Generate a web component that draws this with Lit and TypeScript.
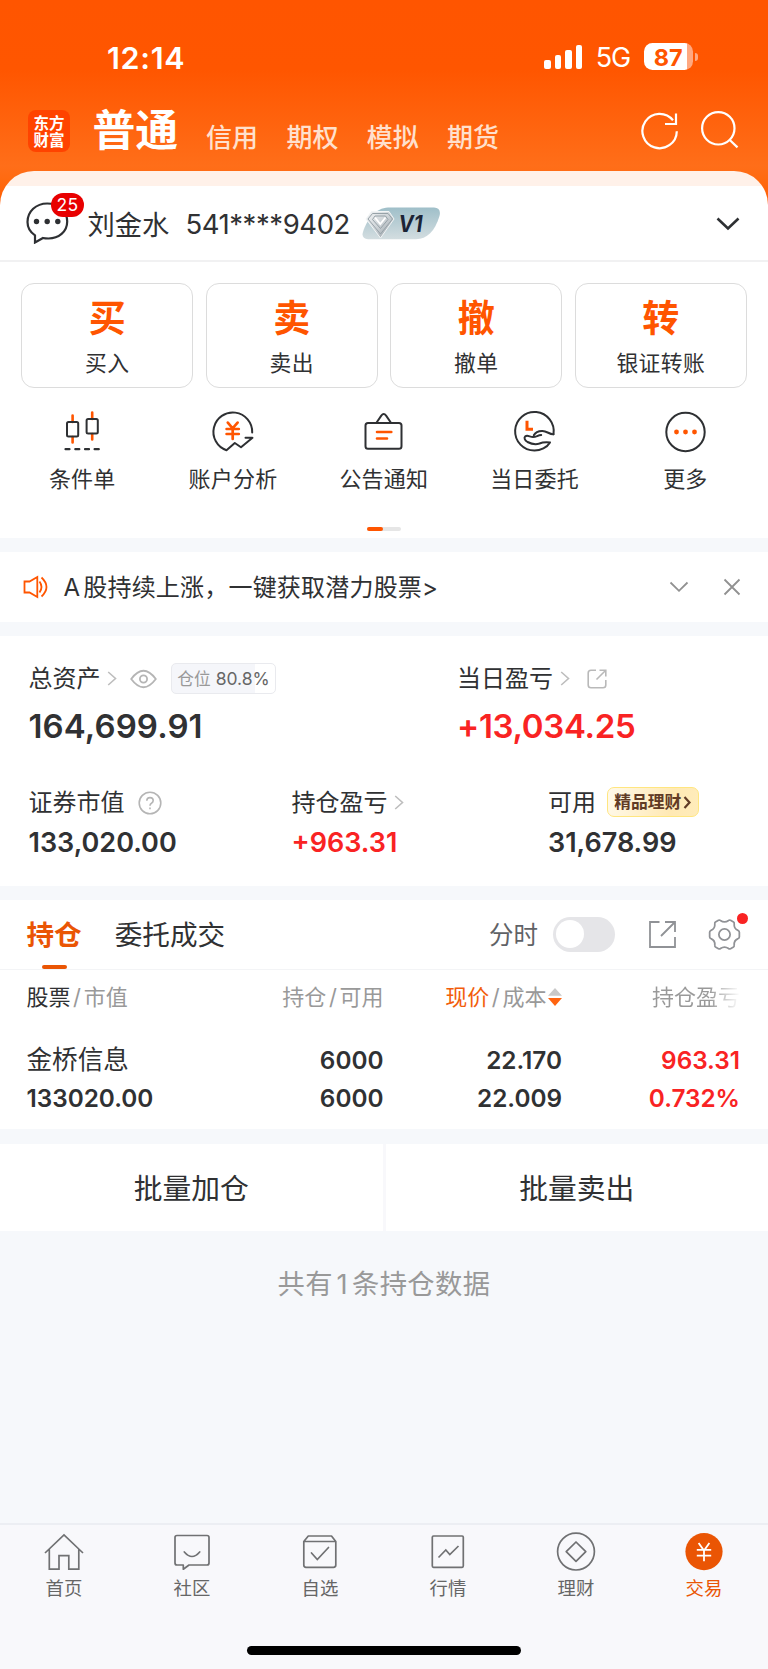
import { LitElement, html, css, svg } from "lit";
import { customElement } from "lit/decorators.js";
import { classMap } from "lit/directives/class-map.js";

const DARK = "#2e3033";
const ORANGE = "#ff5500";

const quickCards = [
  { glyph: "买", label: "买入" },
  { glyph: "卖", label: "卖出" },
  { glyph: "撤", label: "撤单" },
  { glyph: "转", label: "银证转账" },
];

const tools = [
  {
    label: "条件单",
    icon: svg`
      <path d="M12.6 5.5V12M12.6 27V32.5M32.2 2.5V9M32.2 24V29.5" stroke=${ORANGE} stroke-width="2.6" stroke-linecap="round"/>
      <rect x="7" y="12" width="11.2" height="14.5" rx="1.5" stroke=${DARK}/>
      <rect x="26.6" y="9" width="11.2" height="14.5" rx="1.5" stroke=${DARK}/>
      <path d="M5.5 39.2H9.5M15.3 39.2H19.3M25 39.2H29M34.6 39.2H38.8" stroke=${DARK} stroke-width="2.2" stroke-linecap="round"/>`,
  },
  {
    label: "账户分析",
    icon: svg`
      <path d="M42.200 22.500A19.400 19.400 0 1 0 16.500 40.200L24.800 33L31 37.300L42.500 27.800H35.500" stroke=${DARK} stroke-linejoin="round" stroke-linecap="round"/>
      <path d="M17.8 12.6L22.6 18.3L27.6 12.6M16.6 19H28.8M16.6 24H28.8M22.7 18.5V29" stroke=${ORANGE} stroke-width="2.7" stroke-linecap="round"/>`,
  },
  {
    label: "公告通知",
    icon: svg`
      <rect x="4.5" y="13" width="36" height="25.8" rx="2.5" stroke=${DARK}/>
      <path d="M15.6 12.5L20.3 5.6Q22.7 2.6 25.1 5.6L29.8 12.5" stroke=${DARK}/>
      <path d="M16 22H30.3M16 28.5H26" stroke=${ORANGE} stroke-width="2.6" stroke-linecap="round"/>`,
  },
  {
    label: "当日委托",
    icon: svg`
      <path d="M41.500 24.200A19.300 19.300 0 1 0 22.500 40.600C28.500 40.600 35 37.500 38 32.400C34 32 29.500 32.600 27.500 33.500C23 35 18.500 33.500 15.500 32C12.500 30.300 11.800 27.500 13.300 26.300C15.500 24.800 18 27 21 27C24.500 27 25.500 25.300 29.200 25" stroke=${DARK} stroke-linejoin="round" stroke-linecap="round"/>
      <path d="M21.800 25.300C23.500 22 27.500 20.800 30.500 20.900C35 21 38 24.800 41.500 24.200" stroke=${DARK} stroke-linecap="round"/>
      <path d="M15 10.800V19.300H21" stroke=${ORANGE} stroke-width="3"/>`,
  },
  {
    label: "更多",
    icon: svg`
      <circle cx="22.5" cy="22" r="19.2" stroke=${DARK}/>
      <g fill=${ORANGE}><circle cx="13.5" cy="22" r="2.4"/><circle cx="22.5" cy="22" r="2.4"/><circle cx="31.5" cy="22" r="2.4"/></g>`,
  },
];

const navItems = [
  {
    label: "首页",
    icon: svg`<path d="M1 21L20 3L39 21M5.3 17.5V37.2H15V23.6H24.8V37.2H34.8V17.5"/>`,
  },
  {
    label: "社区",
    icon: svg`<path d="M5 3.5H35Q37 3.5 37 5.5V31Q37 33 35 33H17L11.3 37.2V33H5Q3 33 3 31V5.5Q3 3.5 5 3.5Z" stroke-linejoin="round"/><path d="M12.3 20Q20 29 27.7 20" stroke-linecap="round"/>`,
  },
  {
    label: "自选",
    icon: svg`<path d="M3.8 9.5V33Q3.8 35.3 6 35.3H33.5Q35.8 35.3 35.8 33V9.5L31.5 4H8.3ZM3.8 9.5H35.8" stroke-linejoin="round"/><path d="M11.5 21L17.3 27.5L28.5 15.5" stroke-linecap="round"/>`,
  },
  {
    label: "行情",
    icon: svg`<rect x="4.3" y="4" width="31" height="31.3" rx="1.2"/><path d="M10.5 25.5L17.8 18L21.8 22.5L30.5 14"/>`,
  },
  {
    label: "理财",
    icon: svg`<circle cx="20" cy="19.6" r="18.4"/><path d="M20 10L29.8 19.6L20 29.4L10.2 19.6Z" stroke-linejoin="round"/>`,
  },
  {
    label: "交易",
    active: true,
    icon: svg`<circle cx="20" cy="19.6" r="18.6" fill="#ea5504" stroke="none"/><path d="M14.6 11L20 18.6L25.4 11M12.8 17.9H27.2M12.8 23.6H27.2M20 18V29.3" stroke="#fff" stroke-width="1.8"/>`,
  },
];

const chevronRight = html`<svg class="chev" width="10" height="15" viewBox="0 0 10 15"><path d="M1.2 1L8.5 7.5L1.2 14" fill="none" stroke="#bdbdbd" stroke-width="1.6"/></svg>`;

@customElement("app-root")
export class AppRoot extends LitElement {
  static styles = css`
    :host {
      display: flex;
      flex-direction: column;
      width: 768px;
      height: 1669px;
      background: #f6f8fb;
      color: #303133;
      font-family: Inter, "Noto Sans CJK SC", sans-serif;
      white-space: nowrap;
      overflow: hidden;
    }
    * { box-sizing: border-box; }
    svg { display: block; flex: none; fill: none; }
    .top {
      height: 262px;
      flex: none;
      background: linear-gradient(#ff5500 0, #ff5600 70px, #ff6e19 166px, #ff6a10 180px, #ff5a00 210px);
      color: #fff;
    }
    .status { height: 86px; padding: 28px 70px 0 107px; display: flex; align-items: center; }
    .clock { font-size: 30.5px; font-weight: 600; margin-right: auto; letter-spacing: .7px; }
    .net { font-size: 27px; font-weight: 400; letter-spacing: -1px; margin: 1px 13.5px 0 13.5px; }
    .signal { display: flex; align-items: flex-end; gap: 4.2px; height: 24px; }
    .bar { width: 6.3px; background: #fff; border-radius: 2px; }
    .b1 { height: 9.3px; } .b2 { height: 13.8px; } .b3 { height: 18.8px; } .b4 { height: 24px; }
    .battery {
      width: 49px; height: 26.6px; border-radius: 8.5px; margin-top: -1px;
      background: linear-gradient(90deg, #fff 43.3px, #ffa880 43.3px);
      color: #ff5500; font-size: 23.5px; font-weight: 700; display: grid; place-items: center;
    }
    .nub { width: 3.3px; height: 8.5px; background: #ffa880; border-radius: 0 4px 4px 0; margin-left: 2px; }
    .head { height: 85px; padding: 3px 28px 0 28px; display: flex; align-items: center; }
    .logo {
      width: 42px; height: 42px; border-radius: 8px; background: #ff4300; margin-top: 2px;
      display: flex; flex-direction: column; justify-content: center; text-align: center;
      font: 700 15.5px/17px "Noto Sans CJK SC", sans-serif;
    }
    .h1 { font-size: 42.8px; font-weight: 700; margin: 2px 0 0 22.5px; line-height: 60px; }
    .modes { display: flex; gap: 28.3px; margin: 10px auto 0 28px; font-size: 26px; font-weight: 500; color: #ffe0cd; }
    .head svg { margin-top: 1px; }
    .head .search { margin-left: 20.5px; }
    .sheet { height: 91px; background: linear-gradient(#fff1e9 15px, #fff 15px); border-radius: 34px 34px 0 0; padding: 15px 28px 0 26px; border-bottom: 2px solid #f1f1f2; color: #303133; display: flex; align-items: center; }
    .chat { position: relative; width: 44px; height: 42px; }
    .count {
      position: absolute; left: 25px; top: -9.5px; width: 33px; height: 24.5px; border-radius: 13px;
      background: #e80000; color: #fff; font-size: 17.5px; display: grid; place-items: center; letter-spacing: .4px;
    }
    .name { font-size: 27.3px; margin-left: 17.5px; }
    .acct { font-size: 27.5px; margin-left: 16px; letter-spacing: -.42px; padding-top: 1px; }
    .vip { margin-left: 12px; margin-top: 1px; }
    .vtext { font: italic 700 22.5px Inter, sans-serif; }
    .down { margin-left: auto; margin-top: 1px; }
    .panel { background: #fff; flex: none; }
    .quick { height: 276px; padding: 21.3px 21.3px 0; }
    .cards { display: grid; grid-template-columns: repeat(4, 1fr); gap: 12.7px; }
    .card {
      height: 104.5px; border: 1.5px solid #dcdcdc; border-radius: 13px; padding-top: 13px;
      display: flex; flex-direction: column; align-items: center;
    }
    .glyph { color: #ff5500; font-size: 37px; font-weight: 700; line-height: 44px; }
    .clabel { font-size: 21.8px; line-height: 42px; letter-spacing: .4px; margin-top: .5px; }
    .tools { display: grid; grid-template-columns: repeat(5, 150.8px); margin: 22px -14.5px 0; }
    .tool { display: flex; flex-direction: column; align-items: center; }
    .tool svg { stroke-width: 2; }
    .tlabel { font-size: 22px; line-height: 32px; margin-top: 9.5px; letter-spacing: .2px; }
    .pager { display: flex; width: 33.3px; height: 3.6px; border-radius: 2px; background: #e6e6e6; margin: 32px auto 0; }
    .on { width: 16px; background: #ff5500; border-radius: 2px; }
    .notice { height: 70px; margin-top: 14px; padding: 0 27.5px 0 22.5px; display: flex; align-items: center; font-size: 24px; letter-spacing: .2px; }
    .ntext { margin: 0 auto 0 15px; padding-bottom: 3px; }
    .lead { margin-right: 3px; }
    .close { margin-left: 33.5px; }
    .assets { height: 249.5px; margin-top: 14px; padding: 25px 28.5px 0; }
    .duo { display: grid; grid-template-columns: 428.5px 1fr; }
    .trio { display: grid; grid-template-columns: 263px 256.5px 1fr; margin-top: 39px; }
    .lab { display: flex; align-items: center; height: 36px; font-size: 24px; line-height: 34px; padding-bottom: 1px; }
    .chev { margin-left: 6.5px; }
    .eye { margin-left: 12.5px; }
    .share { margin-left: 17px; }
    .help { margin-left: 13.5px; }
    .big { font-size: 33px; font-weight: 600; line-height: 40px; margin-top: 9px; letter-spacing: .1px; }
    .big.red { letter-spacing: -.3px; }
    .mid { font-size: 27px; font-weight: 600; line-height: 34px; margin-top: 4.5px; }
    .red { color: #f92323; }
    .tag {
      width: 105px; height: 31.5px; margin-left: 14.5px; border: 1.5px solid #e9eaee; border-radius: 5px;
      background: linear-gradient(90deg, #f5f6fa 83px, #fff 83px); font-size: 17.5px; color: #666;
      display: flex; align-items: center; justify-content: center; gap: 5px;
    }
    .tagname { font-size: 16.7px; color: #999; }
    .gold {
      width: 91.5px; height: 30px; margin: -1px 0 0 11px; border-radius: 7px; border: 1.5px solid #ffe680;
      background: linear-gradient(100deg, #fff9ea, #ffe9b4 70%, #ffecbb); color: #613b25;
      font-size: 16.8px; font-weight: 700; display: flex; align-items: center; justify-content: center; gap: 2px;
    }
    .hold { height: 229.5px; margin-top: 14px; }
    .tabs { height: 70.5px; border-bottom: 1.5px solid #f3f4f6; display: flex; align-items: center; padding: 0 27.5px 0 26.5px; font-size: 27.6px; }
    .tab { height: 69px; line-height: 70px; display: flex; flex-direction: column; align-items: center; }
    .tab.current { color: #ea5504; font-weight: 600; }
    .tab.current::after { content: ""; width: 25px; height: 5px; border-radius: 2px; background: #ea5504; margin-top: -5px; }
    .second { margin: 0 auto 0 33px; }
    .time { font-size: 24.5px; color: #606266; margin-top: -1px; }
    .toggle { width: 62.5px; height: 35px; border-radius: 18px; background: #e5e5e8; padding: 3.5px; margin: 0 34px 0 14.5px; }
    .knob { display: block; width: 28px; height: 28px; border-radius: 50%; background: #fff; }
    .gearbox { position: relative; margin-left: 31.5px; }
    .dot { position: absolute; left: 29px; top: -5px; width: 11px; height: 11px; border-radius: 50%; background: #f92323; }
    .table { display: grid; grid-template-columns: 180px 177px 178.5px 178px; padding: 8.5px 0 0 26.5px; }
    .th { font-size: 22px; line-height: 38px; color: #999; display: flex; align-items: center; justify-content: flex-end; gap: 2.6px; height: 37px; }
    .sort { margin-left: -1px; }
    .th.left { justify-content: flex-start; }
    .dk { color: #303133; } .or { color: #f25d0b; }
    .fade { background: linear-gradient(90deg, #999 65%, #fff 100%); -webkit-background-clip: text; background-clip: text; color: transparent; }
    .td { font-size: 24.3px; font-weight: 600; line-height: 38px; text-align: right; }
    .td.left { text-align: left; }
    .r1 { margin-top: 25.5px; }
    .td.stock { font-size: 25.6px; font-weight: 400; }
    .batch { display: grid; grid-template-columns: 1fr 1fr; gap: 3px; height: 87px; margin-top: 15px; flex: none; background: #f8f8fb; }
    .bbtn { background: #fff; display: grid; place-items: center; font-size: 28.8px; padding-bottom: 2.5px; }
    .foot { text-align: center; margin-top: 33px; font-size: 27.3px; line-height: 42px; color: #999; letter-spacing: .4px; }
    .num { margin: 0 4px 0 3.5px; }
    .nav { margin-top: auto; height: 146px; border-top: 2px solid #eceef3; background: #f8f8fb; }
    .items { display: grid; grid-template-columns: repeat(6, 128px); padding-top: 7px; }
    .item { display: flex; flex-direction: column; align-items: center; font-size: 18.4px; line-height: 28px; color: #666; }
    .item svg { stroke: #707173; stroke-width: 1.7; }
    .item span { margin-top: 1.5px; }
    .item.active { color: #ea5504; }
    .home { width: 274px; height: 9px; border-radius: 5px; background: #000; margin: 44.5px auto 0; }
  `;

  render() {
    return html`
      <header class="top">
        <div class="status">
          <span class="clock">12:14</span>
          <span class="signal"><i class="bar b1"></i><i class="bar b2"></i><i class="bar b3"></i><i class="bar b4"></i></span>
          <span class="net">5G</span>
          <span class="battery">87</span><i class="nub"></i>
        </div>
        <div class="head">
          <div class="logo"><span>东方</span><span>财富</span></div>
          <h1 class="h1">普通</h1>
          <nav class="modes"><span>信用</span><span>期权</span><span>模拟</span><span>期货</span></nav>
          <svg width="40" height="40" viewBox="0 0 40 40" stroke="#fff" stroke-width="2.2"><path d="M36.8 20.2A17.2 17.2 0 1 1 33 9.2M36 2.5V13H25"/></svg>
          <svg class="search" width="40" height="40" viewBox="0 0 40 40" stroke="#fff" stroke-width="2.2"><circle cx="18.3" cy="17.3" r="16.2"/><path d="M29.5 28.8L37.5 36.4"/></svg>
        </div>
        <div class="sheet">
          <div class="chat">
            <svg width="44" height="42" viewBox="0 0 44 42"><path d="M9 40.5V33.3C4 30 1.500 25.500 1.500 20C1.500 9.500 10 1.500 21.200 1.500C32.500 1.500 41.200 9.500 41.200 19.500C41.200 30 32.500 36.500 22.500 36.500Q19 36.500 17 36Z" stroke=${DARK} stroke-width="2.200"/><g fill=${DARK}><circle cx="10.500" cy="19.500" r="2.700"/><circle cx="21.200" cy="19.500" r="2.700"/><circle cx="31.800" cy="19.500" r="2.700"/></g></svg>
            <span class="count">25</span>
          </div>
          <span class="name">刘金水</span><span class="acct">541****9402</span>
          <svg class="vip" width="79" height="33" viewBox="0 0 79 33">
            <defs>
              <linearGradient id="vg" x1="0" y1="0" x2="0" y2="1"><stop offset="0" stop-color="#9fbfc9"/><stop offset="1" stop-color="#d3dde0"/></linearGradient>
              <linearGradient id="dg" x1="0" y1="0" x2="1" y2="1"><stop offset="0" stop-color="#f4f6f7"/><stop offset=".5" stop-color="#ccd2d6"/><stop offset="1" stop-color="#8d969c"/></linearGradient>
            </defs>
            <path d="M26 .5H72Q79.500 1 77.500 9C73 24 65 32 54 32.300H6Q-1 31.500 1 25C5 12 14 1 26 .5Z" fill="url(#vg)"/>
            <path d="M9.500 4.500H27L32 12L18.500 31L4 12Z" fill="url(#dg)" stroke="#f2f5f6" stroke-width="1"/>
            <path d="M6 12L10.500 6.500H26L30.500 12L18.500 27ZM10.500 12.500L13 9H23.500L26 12.500L18.500 21.500Z" stroke="#97a2a8" stroke-width="1"/>
            <path d="M13 10.500L18.300 17L23.500 10.500" stroke="#fff" stroke-width="1.800"/>
            <text class="vtext" x="36.500" y="24.500" fill="#1b2436" textLength="24" lengthAdjust="spacingAndGlyphs">V1</text>
          </svg>
          <svg class="down" width="24" height="14" viewBox="0 0 24 14"><path d="M1.500 1.500L12 11.500L22.500 1.500" stroke=${DARK} stroke-width="2.600"/></svg>
        </div>
      </header>

      <section class="panel quick">
        <div class="cards">
          ${quickCards.map((c) => html`<div class="card"><span class="glyph">${c.glyph}</span><span class="clabel">${c.label}</span></div>`)}
        </div>
        <div class="tools">
          ${tools.map((t) => html`<div class="tool"><svg width="45" height="44" viewBox="0 0 45 44">${t.icon}</svg><span class="tlabel">${t.label}</span></div>`)}
        </div>
        <div class="pager"><i class="on"></i></div>
      </section>

      <section class="panel notice">
        <svg width="26" height="24" viewBox="0 0 26 24" stroke=${ORANGE} stroke-width="1.800"><path d="M1.500 6.500H6.500L14.300 2V22L6.500 17.500H1.500ZM16.500 6.500Q20.500 12 16.500 17.500M18.500 2.500Q28.500 12 18.500 21.500"/></svg>
        <span class="ntext"><span class="lead">A</span>股持续上涨，一键获取潜力股票&gt;</span>
        <svg width="20" height="12" viewBox="0 0 20 12"><path d="M1.500 1.500L10 9.800L18.500 1.500" stroke="#919191" stroke-width="1.800"/></svg>
        <svg class="close" width="18" height="18" viewBox="0 0 18 18"><path d="M1.500 1.500L16.500 16.500M16.500 1.500L1.500 16.500" stroke="#919191" stroke-width="1.800"/></svg>
      </section>

      <section class="panel assets">
        <div class="duo">
          <div>
            <div class="lab">总资产${chevronRight}
              <svg class="eye" width="27" height="20" viewBox="0 0 27 20" stroke="#b5b5b5" stroke-width="1.800"><path d="M1.200 10Q13.500 -6.500 25.800 10Q13.500 26.500 1.200 10Z"/><circle cx="13.500" cy="10" r="3.600"/></svg>
              <span class="tag"><span class="tagname">仓位</span><span>80.8%</span></span>
            </div>
            <div class="big">164,699.91</div>
          </div>
          <div>
            <div class="lab">当日盈亏${chevronRight}
              <svg class="share" width="20" height="20" viewBox="0 0 20 20" stroke="#b9b9b9" stroke-width="1.600"><path d="M9 1.200H4Q1.200 1.200 1.200 4V16Q1.200 18.800 4 18.800H16Q18.800 18.800 18.800 16V11M12.500 1.200H18.800V7.500M18.800 1.200L9.500 10.500"/></svg>
            </div>
            <div class="big red">+13,034.25</div>
          </div>
        </div>
        <div class="trio">
          <div>
            <div class="lab">证券市值
              <svg class="help" width="24" height="24" viewBox="0 0 24 24" stroke="#b5b5b5" stroke-width="1.600"><circle cx="12" cy="12" r="10.800"/><path d="M8.800 9.800Q8.800 6.600 12 6.600T15.200 9.600Q15.200 11.300 13.500 12.200Q12 13 12 14.800M12 16.500V18.200"/></svg>
            </div>
            <div class="mid">133,020.00</div>
          </div>
          <div>
            <div class="lab">持仓盈亏${chevronRight}</div>
            <div class="mid red">+963.31</div>
          </div>
          <div>
            <div class="lab">可用<span class="gold">精品理财<svg width="8" height="13" viewBox="0 0 8 13"><path d="M1.500 1L6.500 6.500L1.500 12" stroke="#613b25" stroke-width="2.200"/></svg></span></div>
            <div class="mid">31,678.99</div>
          </div>
        </div>
      </section>

      <section class="panel hold">
        <div class="tabs">
          <span class="tab current">持仓</span><span class="tab second">委托成交</span>
          <span class="time">分时</span><span class="toggle"><i class="knob"></i></span>
          <svg width="27" height="27" viewBox="0 0 27 27" stroke="#909296" stroke-width="1.800"><path d="M10.500 1H1V26H26V16M16 1H26V11M26 1L12 15"/></svg>
          <span class="gearbox">
            <svg width="33" height="33" viewBox="0 0 34 34" stroke="#909296" stroke-width="1.800" stroke-linejoin="round"><path d="M10.800 2.400Q12 1.800 12.800 2.500Q17 5.600 21.200 2.500Q22 1.800 23.200 2.400L26.300 4.200Q27.200 4.800 27 6Q26.500 11 31 12.800Q32.300 13.400 32.300 14.800V19.200Q32.300 20.600 31 21.200Q26.500 23 27 28Q27.200 29.200 26.300 29.800L23.200 31.600Q22 32.200 21.200 31.500Q17 28.400 12.800 31.500Q12 32.200 10.800 31.600L7.700 29.800Q6.800 29.200 7 28Q7.500 23 3 21.200Q1.700 20.600 1.700 19.200V14.800Q1.700 13.400 3 12.800Q7.500 11 7 6Q6.800 4.800 7.700 4.200Z"/><circle cx="17" cy="17" r="5.800"/></svg>
            <i class="dot"></i>
          </span>
        </div>
        <div class="table">
          <div class="th left"><span class="dk">股票</span><span>/</span><span>市值</span></div>
          <div class="th"><span>持仓</span><span>/</span><span>可用</span></div>
          <div class="th"><span class="or">现价</span><span>/</span><span>成本</span><svg class="sort" width="14" height="18" viewBox="0 0 14 18"><path d="M0 7.800L7 0L14 7.800Z" fill="#c9c9c9"/><path d="M0 10L7 18L14 10Z" fill="#ff6410"/></svg></div>
          <div class="th"><span class="fade">持仓盈亏</span></div>
          <div class="td left stock r1">金桥信息</div><div class="td r1">6000</div><div class="td r1">22.170</div><div class="td r1 red">963.31</div>
          <div class="td left">133020.00</div><div class="td">6000</div><div class="td">22.009</div><div class="td red">0.732%</div>
        </div>
      </section>

      <section class="batch"><div class="bbtn">批量加仓</div><div class="bbtn">批量卖出</div></section>
      <div class="foot">共有<span class="num">1</span>条持仓数据</div>

      <footer class="nav">
        <div class="items">
          ${navItems.map((n) => html`<div class=${classMap({ item: true, active: !!n.active })}><svg width="40" height="40" viewBox="0 0 40 40">${n.icon}</svg><span>${n.label}</span></div>`)}
        </div>
        <div class="home"></div>
      </footer>
    `;
  }
}
